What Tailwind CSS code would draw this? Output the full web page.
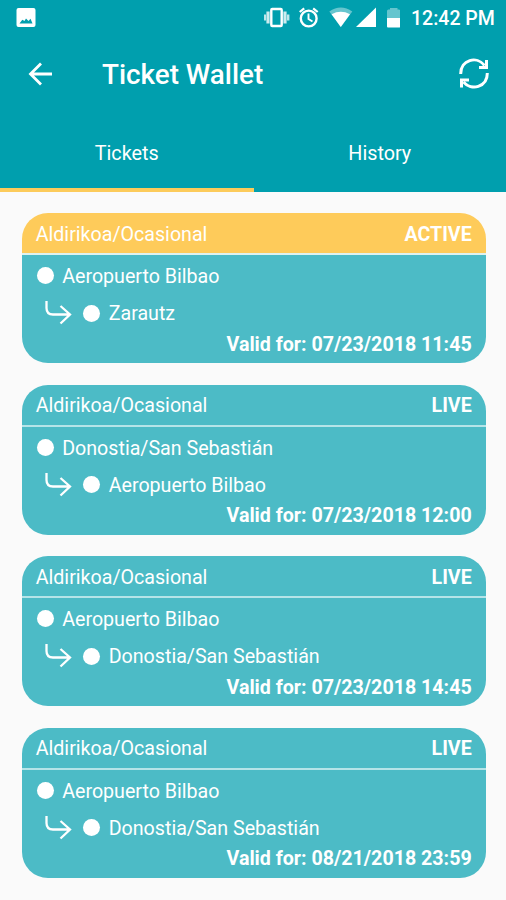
<!DOCTYPE html>
<html lang="en">
<head>
<meta charset="utf-8">
<title>Ticket Wallet</title>
<script src="https://cdn.jsdelivr.net/npm/@tailwindcss/browser@4"></script>
</head>
<body class="w-[506px] h-[900px] overflow-hidden bg-[#fafafa] text-white font-['Roboto',sans-serif]">
<header class="h-[191.5px] bg-[#009fae] flex flex-col">
  <div class="h-9 flex items-center pl-4 pr-[11px]">
    <svg class="w-5 h-5" viewBox="0 0 20 20"><path fill="#fff" fill-rule="evenodd" d="M2.500 0H17.500Q19.500 0 19.500 2V17Q19.500 19 17.500 19H2.500Q.500 19 .500 17V2Q.500 0 2.500 0ZM3.500 15.500H16.500L14.500 10.800L12.500 13L10 10.500L8.500 13L6.300 11.800Z"/></svg>
    <div class="flex-1"></div>
    <svg class="w-[136px] h-6" viewBox="264 6 136 24" fill="none" stroke="#fff">
      <rect x="271.300" y="9" width="10.400" height="17" rx="1" stroke-width="2.400"/>
      <path d="M268 11.500V23.500M285 11.500V23.500" stroke-width="3.200" opacity=".8"/><path d="M264.800 14.500V20.500M288.200 14.500V20.500" stroke-width="2.400" opacity=".75"/>
      <circle cx="308.700" cy="18.500" r="7.900" stroke-width="2.400"/><path d="M308.500 13.500V19L312.500 21.500" stroke-width="1.900"/><path d="M299.700 12L304.200 8.300M317.700 12L313.200 8.300" stroke-width="2.200"/>
      <path d="M329.300 11.600Q340.800 3.500 352.300 11.600L340.800 27Z" fill="#fff" fill-opacity=".4" stroke="none"/><path d="M331.600 14.200Q340.800 9.500 350 14.200L340.800 27Z" fill="#fff" stroke="none"/>
      <path d="M356 27L376 7.500V27Z" fill="#fff" stroke="none"/>
      <path d="M387 18V11Q387 9.500 388.500 9.500H390V8H397.500V9.500H399Q400.300 9.500 400.300 11V18Z" fill="#fff" fill-opacity=".4" stroke="none"/><path d="M387 18H400.300V26.500Q400.300 27.500 399.300 27.500H388Q387 27.500 387 26.500Z" fill="#fff" stroke="none"/>
    </svg>
    <div class="w-[84px] ml-[11px] pt-px text-[19.500px] font-medium whitespace-nowrap">12:42 PM</div>
  </div>
  <div class="h-[76px] flex items-center pl-[28px] pr-[16px]">
    <svg class="w-6 h-6" viewBox="0 0 24 24" fill="none" stroke="#fff" stroke-width="2.800"><path d="M24 12H2.500M13 1.500L2.500 12L13 22.500"/></svg>
    <h1 class="ml-[50px] pt-[2px] text-[27.800px] font-medium leading-8">Ticket Wallet</h1>
    <div class="flex-1"></div>
    <svg class="w-8 h-8" viewBox="457 58 32 32" fill="none" stroke="#fff" stroke-width="3"><path d="M459.700 74C459.500 59.500 476 55.500 483.500 65.500M486.300 73C486.500 87.500 470 91 462.500 82"/><path d="M485.500 60V67.500H478M460.500 87.500V80H468"/></svg>
  </div>
  <nav class="flex flex-1 text-[19.800px]">
    <div class="w-[253.500px] flex items-center justify-center pt-[8px] border-b-[4.500px] border-[#fccb5b]">Tickets</div>
    <div class="flex-1 flex items-center justify-center pt-[4px]">History</div>
  </nav>
</header>
<main id="list" class="pt-[21.600px] px-[21px] flex flex-col gap-[21.600px]"></main>
<template id="ticket">
  <article class="ml-[.7px] mr-[-.7px] h-[150px] rounded-[26px] overflow-hidden text-[19.650px] leading-6">
    <div data-head class="h-[42px] flex justify-between items-center px-[14px] pt-[3px] border-b-2">
      <span data-kind></span><b data-status class="font-bold text-[19.600px]"></b>
    </div>
    <div class="h-[108px] bg-[#4cbbc6] pt-[10px]">
      <div class="flex items-center h-6 pl-[15.500px]"><i class="w-[17px] h-[17px] rounded-full bg-white mr-[8px] -mt-[3px]"></i><span data-from></span></div>
      <div class="flex items-center h-6 mt-[13px] pl-[23px]">
        <svg class="w-[27px] h-6 mr-[11.500px] -mt-[2px]" viewBox="0 0 27 24" fill="none" stroke="#fff" stroke-width="2.300"><path d="M1.500 0V7Q1.500 13.500 8 13.500H25M15.500 5L25 13.500L15.500 22.500"/></svg>
        <i class="w-[17px] h-[17px] rounded-full bg-white mr-[8.500px] -mt-[2px]"></i><span data-to></span>
      </div>
      <div data-date class="text-right pr-[14px] mt-[6.500px] font-bold"></div>
    </div>
  </article>
</template>
<script>
const tickets = [
  ['ACTIVE', 'Aeropuerto Bilbao', 'Zarautz', '07/23/2018 11:45'],
  ['LIVE', 'Donostia/San Sebastián', 'Aeropuerto Bilbao', '07/23/2018 12:00'],
  ['LIVE', 'Aeropuerto Bilbao', 'Donostia/San Sebastián', '07/23/2018 14:45'],
  ['LIVE', 'Aeropuerto Bilbao', 'Donostia/San Sebastián', '08/21/2018 23:59']
];
for (const [status, from, to, date] of tickets) {
  const node = document.getElementById('ticket').content.cloneNode(true);
  const set = (key, value) => node.querySelector(`[data-${key}]`).textContent = value;
  set('kind', 'Aldirikoa/Ocasional');
  set('status', status);
  set('from', from);
  set('to', to);
  set('date', 'Valid for: ' + date);
  const head = node.querySelector('[data-head]');
  head.className += status === 'ACTIVE' ? ' bg-[#fecb5a] border-[#dff2f0]' : ' bg-[#4cbbc6] border-[#b5e4e8]';
  document.getElementById('list').append(node);
}
</script>
</body>
</html>
